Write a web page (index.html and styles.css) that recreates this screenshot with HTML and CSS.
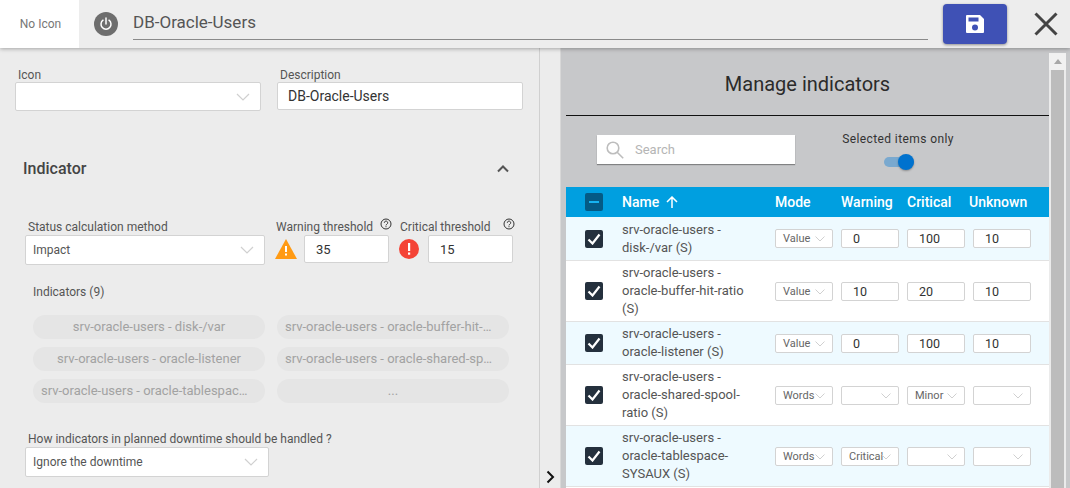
FILE: index.html
```html
<!DOCTYPE html>
<html>
<head>
  <title>DB-Oracle-Users</title>
  <link rel="stylesheet" href="styles.css">
</head>
<body>
  <!-- Top bar -->
  <div class="topbar">
    <div class="no-icon">No Icon</div>
    <div class="power">
      <svg width="14" height="14" viewBox="0 0 14 14"><path d="M4 3.2a5 5 0 1 0 6 0M7 1v6" fill="none" stroke="#fff" stroke-width="1.5" stroke-linecap="round"/></svg>
    </div>
    <div class="title-input">DB-Oracle-Users</div>
    <button class="save">
      <svg width="18" height="18" viewBox="0 0 18 18"><path d="M1 0h13l4 4v13a1 1 0 0 1-1 1H1a1 1 0 0 1-1-1V1a1 1 0 0 1 1-1z" fill="#fff"/><rect x="2.5" y="2.5" width="10" height="4" fill="#3f51b5"/><circle cx="9" cy="12.5" r="3" fill="#3f51b5"/></svg>
    </button>
    <div class="close">
      <svg width="24" height="24" viewBox="0 0 24 24"><path d="M1.5 1.5l21 21M22.5 1.5l-21 21" stroke="#444" stroke-width="3" fill="none"/></svg>
    </div>
  </div>

  <div class="main">
    <!-- Left form -->
    <div class="form">
      <div class="row-top">
        <div class="field">
          <label>Icon</label>
          <div class="select tall"><span></span><svg class="chev" width="14" height="8" viewBox="0 0 14 8"><path d="M1 1l6 6 6-6" fill="none" stroke="#d0d0d0" stroke-width="1.2"/></svg></div>
        </div>
        <div class="field">
          <label>Description</label>
          <div class="input desc">DB-Oracle-Users</div>
        </div>
      </div>

      <div class="section-head">
        <h3>Indicator</h3>
        <svg width="14" height="9" viewBox="0 0 14 9"><path d="M2 7.5L7 2.5l5 5" fill="none" stroke="#555" stroke-width="2"/></svg>
      </div>

      <div class="row-status">
        <div class="field status">
          <label>Status calculation method</label>
          <div class="select"><span>Impact</span><svg class="chev" width="14" height="8" viewBox="0 0 14 8"><path d="M1 1l6 6 6-6" fill="none" stroke="#d0d0d0" stroke-width="1.2"/></svg></div>
        </div>
        <div class="field warn">
          <label>Warning threshold <svg class="help" width="12" height="12" viewBox="0 0 12 12"><circle cx="6" cy="6" r="5" fill="none" stroke="#333" stroke-width="1"/><path d="M4.3 4.8a1.7 1.7 0 1 1 2.6 1.4c-.6.4-.9.7-.9 1.2" fill="none" stroke="#333" stroke-width="1"/><rect x="5.5" y="8.2" width="1" height="1" fill="#333"/></svg></label>
          <div class="thresh">
            <svg width="22" height="20" viewBox="0 0 22 20"><path d="M11 0l11 20H0z" fill="#ff9a13"/><rect x="10" y="7" width="2" height="6" fill="#fff"/><rect x="10" y="14.5" width="2" height="2" fill="#fff"/></svg>
            <div class="input small">35</div>
          </div>
        </div>
        <div class="field crit">
          <label>Critical threshold <svg class="help" width="12" height="12" viewBox="0 0 12 12"><circle cx="6" cy="6" r="5" fill="none" stroke="#333" stroke-width="1"/><path d="M4.3 4.8a1.7 1.7 0 1 1 2.6 1.4c-.6.4-.9.7-.9 1.2" fill="none" stroke="#333" stroke-width="1"/><rect x="5.5" y="8.2" width="1" height="1" fill="#333"/></svg></label>
          <div class="thresh">
            <svg width="20" height="20" viewBox="0 0 20 20"><circle cx="10" cy="10" r="10" fill="#f44336"/><rect x="9" y="4" width="2.2" height="8" fill="#fff"/><rect x="9" y="13.5" width="2.2" height="2.2" fill="#fff"/></svg>
            <div class="input small">15</div>
          </div>
        </div>
      </div>

      <div class="chips-title">Indicators (9)</div>
      <div class="chips">
        <div class="chip">srv-oracle-users - disk-/var</div>
        <div class="chip cut">srv-oracle-users - oracle-buffer-hit-…</div>
        <div class="chip">srv-oracle-users - oracle-listener</div>
        <div class="chip cut">srv-oracle-users - oracle-shared-sp…</div>
        <div class="chip cut">srv-oracle-users - oracle-tablespac…</div>
        <div class="chip">...</div>
      </div>

      <div class="field downtime">
        <label>How indicators in planned downtime should be handled ?</label>
        <div class="select"><span>Ignore the downtime</span><svg class="chev" width="14" height="8" viewBox="0 0 14 8"><path d="M1 1l6 6 6-6" fill="none" stroke="#d0d0d0" stroke-width="1.2"/></svg></div>
      </div>
    </div>

    <!-- Collapse handle -->
    <div class="handle">
      <svg width="9" height="14" viewBox="0 0 9 14"><path d="M1.5 1.5L7 7l-5.5 5.5" fill="none" stroke="#111" stroke-width="2"/></svg>
    </div>

    <!-- Manage indicators panel -->
    <div class="panel">
      <div class="panel-body">
        <div class="panel-title">Manage indicators</div>
        <div class="toolbar">
          <div class="search">
            <svg width="18" height="18" viewBox="0 0 18 18"><circle cx="7" cy="7" r="5.8" fill="none" stroke="#bdbdbd" stroke-width="1.6"/><path d="M11.2 11.2l6 6" stroke="#bdbdbd" stroke-width="1.6"/></svg>
            <span>Search</span>
          </div>
          <div class="selected-only">
            <div>Selected items only</div>
            <div class="switch"><i></i></div>
          </div>
        </div>

        <div class="table">
          <div class="tr th">
            <div class="cb minus"><i></i></div>
            <div class="th-name">Name
              <svg width="12" height="12" viewBox="0 0 12 12"><path d="M6 12V1M1 6l5-5 5 5" fill="none" stroke="#fff" stroke-width="1.5"/></svg>
            </div>
            <div>Mode</div><div>Warning</div><div>Critical</div><div class="th-unknown">Unknown</div>
          </div>

          <div class="tr alt">
            <div class="cb"><svg width="14" height="12" viewBox="0 0 14 12"><path d="M1.5 6.5l4 4 7-9" fill="none" stroke="#fff" stroke-width="2.2"/></svg></div>
            <div class="name">srv-oracle-users - disk-/var (S)</div>
            <div class="mini-sel">Value<svg width="10" height="6" viewBox="0 0 10 6"><path d="M.5.5L5 5 9.500.5" fill="none" stroke="#d0d0d0"/></svg></div>
            <div class="mini">0</div><div class="mini">100</div><div class="mini">10</div>
          </div>
          <div class="tr">
            <div class="cb"><svg width="14" height="12" viewBox="0 0 14 12"><path d="M1.5 6.5l4 4 7-9" fill="none" stroke="#fff" stroke-width="2.2"/></svg></div>
            <div class="name">srv-oracle-users - oracle-buffer-hit-ratio (S)</div>
            <div class="mini-sel">Value<svg width="10" height="6" viewBox="0 0 10 6"><path d="M.5.5L5 5 9.500.5" fill="none" stroke="#d0d0d0"/></svg></div>
            <div class="mini">10</div><div class="mini">20</div><div class="mini">10</div>
          </div>
          <div class="tr alt">
            <div class="cb"><svg width="14" height="12" viewBox="0 0 14 12"><path d="M1.5 6.5l4 4 7-9" fill="none" stroke="#fff" stroke-width="2.2"/></svg></div>
            <div class="name">srv-oracle-users - oracle-listener (S)</div>
            <div class="mini-sel">Value<svg width="10" height="6" viewBox="0 0 10 6"><path d="M.5.5L5 5 9.500.5" fill="none" stroke="#d0d0d0"/></svg></div>
            <div class="mini">0</div><div class="mini">100</div><div class="mini">10</div>
          </div>
          <div class="tr">
            <div class="cb"><svg width="14" height="12" viewBox="0 0 14 12"><path d="M1.5 6.5l4 4 7-9" fill="none" stroke="#fff" stroke-width="2.2"/></svg></div>
            <div class="name">srv-oracle-users - oracle-shared-spool-ratio (S)</div>
            <div class="mini-sel">Words<svg width="10" height="6" viewBox="0 0 10 6"><path d="M.5.5L5 5 9.500.5" fill="none" stroke="#d0d0d0"/></svg></div>
            <div class="mini-sel"><svg width="10" height="6" viewBox="0 0 10 6"><path d="M.5.5L5 5 9.500.5" fill="none" stroke="#d0d0d0"/></svg></div>
            <div class="mini-sel">Minor<svg width="10" height="6" viewBox="0 0 10 6"><path d="M.5.5L5 5 9.500.5" fill="none" stroke="#d0d0d0"/></svg></div>
            <div class="mini-sel"><svg width="10" height="6" viewBox="0 0 10 6"><path d="M.5.5L5 5 9.500.5" fill="none" stroke="#d0d0d0"/></svg></div>
          </div>
          <div class="tr alt">
            <div class="cb"><svg width="14" height="12" viewBox="0 0 14 12"><path d="M1.5 6.5l4 4 7-9" fill="none" stroke="#fff" stroke-width="2.2"/></svg></div>
            <div class="name">srv-oracle-users - oracle-tablespace-SYSAUX (S)</div>
            <div class="mini-sel">Words<svg width="10" height="6" viewBox="0 0 10 6"><path d="M.5.5L5 5 9.500.5" fill="none" stroke="#d0d0d0"/></svg></div>
            <div class="mini-sel">Critical<svg width="10" height="6" viewBox="0 0 10 6"><path d="M.5.5L5 5 9.500.5" fill="none" stroke="#d0d0d0"/></svg></div>
            <div class="mini-sel"><svg width="10" height="6" viewBox="0 0 10 6"><path d="M.5.5L5 5 9.500.5" fill="none" stroke="#d0d0d0"/></svg></div>
            <div class="mini-sel"><svg width="10" height="6" viewBox="0 0 10 6"><path d="M.5.5L5 5 9.500.5" fill="none" stroke="#d0d0d0"/></svg></div>
          </div>
          <div class="tr rest"></div>
        </div>
      </div>

      <div class="scrollbar">
        <div class="scroll-up"><i></i></div>
        <div class="scroll-thumb"></div>
      </div>
    </div>
  </div>
</body>
</html>
```

FILE: styles.css
```css
/* Basic reset */
* {
  box-sizing: border-box;
  margin: 0;
  padding: 0;
}

body {
  font-family: Roboto, Arial, sans-serif;
  background-color: #ececec;
  color: #444;
  width: 1070px;
  height: 488px;
  overflow: hidden;
  display: flex;
  flex-direction: column;
}

/* Top bar */
.topbar {
  height: 48px;
  display: flex;
  align-items: center;
  flex-shrink: 0;
  position: relative;
  z-index: 2;
  background-color: #ededed;
  box-shadow: 0 1px 4px rgba(0, 0, 0, 0.3);
}

.no-icon {
  width: 79px;
  height: 48px;
  padding-left: 2px;
  background-color: #fff;
  color: #777;
  font-size: 12px;
  display: flex;
  align-items: center;
  justify-content: center;
}

.power {
  width: 24px;
  height: 24px;
  margin-left: 15px;
  border-radius: 50%;
  background-color: #6e6e6e;
  display: flex;
  align-items: center;
  justify-content: center;
}

.title-input {
  width: 795px;
  height: 32px;
  margin-left: 15px;
  align-self: flex-start;
  margin-top: 8px;
  border-bottom: 1px solid #8a8a8a;
  font-size: 17px;
  line-height: 28px;
  color: #555;
}

.save {
  width: 64px;
  height: 40px;
  margin-left: 15px;
  background-color: #3f51b5;
  border: none;
  border-radius: 4px;
  box-shadow: 0 1px 3px rgba(0, 0, 0, 0.4);
  display: flex;
  align-items: center;
  justify-content: center;
}

.close {
  margin-left: 27px;
  width: 24px;
  height: 24px;
}

/* Main area */
.main {
  flex: 1;
  display: flex;
  min-height: 0;
}

.form {
  width: 540px;
  border-right: 1px solid #d0d0d0;
  padding: 20px 0 0 15px;
  flex-shrink: 0;
}

label {
  display: block;
  font-size: 12px;
  line-height: 14px;
  color: #555;
  white-space: nowrap;
}

.field > label {
  padding-left: 3px;
}

.row-top {
  display: flex;
  gap: 16px;
}

.row-top .field {
  width: 246px;
}

.select,
.input {
  background-color: #fff;
  border: 1px solid #d3d3d3;
  border-radius: 2px;
  font-size: 12px;
  color: #555;
  display: flex;
  align-items: center;
}

.select {
  height: 30px;
  margin-top: 1px;
  justify-content: space-between;
  padding: 0 10px 0 7px;
}

.select.tall {
  height: 29px;
  margin-top: 0;
}

.input {
  color: #333;
}

.input.desc {
  height: 28px;
  font-size: 14px;
  padding-left: 10px;
}

.input.small {
  width: 85px;
  height: 28px;
  font-size: 13px;
  padding-left: 11px;
}

.section-head {
  width: 487px;
  margin: 47px 0 0 8px;
  display: flex;
  justify-content: space-between;
  align-items: center;
  height: 20px;
}

.section-head h3 {
  font-size: 16px;
  font-weight: 500;
  color: #444;
}

.row-status {
  display: flex;
  margin: 42px 0 0 10px;
}

.status {
  width: 240px;
  margin-right: 11px;
}

.warn {
  width: 114px;
  margin-right: 10px;
}

.warn > label,
.crit > label {
  padding-left: 0;
  position: relative;
}

.help {
  position: absolute;
  right: -2px;
  top: -2px;
}

.crit .help {
  right: -1px;
}

.crit {
  width: 114px;
}

.thresh {
  display: flex;
  align-items: center;
  margin-top: 1px;
  margin-left: -1px;
  gap: 9px;
}

.warn .thresh {
  gap: 7px;
}

.chips-title {
  margin: 20px 0 0 18px;
  font-size: 12px;
  line-height: 14px;
  color: #555;
}

.chips {
  display: grid;
  grid-template-columns: 232px 232px;
  column-gap: 12px;
  row-gap: 8px;
  margin: 16px 0 0 18px;
}

.chip {
  height: 24px;
  line-height: 24px;
  border-radius: 12px;
  background-color: #e5e5e5;
  color: #a2a2a2;
  font-size: 13px;
  text-align: center;
  white-space: nowrap;
}

.chip.cut {
  text-align: left;
  padding-left: 8px;
}

.downtime {
  width: 244px;
  margin: 29px 0 0 10px;
}

/* Collapse handle */
.handle {
  width: 20px;
  flex-shrink: 0;
  display: flex;
  align-items: flex-end;
  justify-content: center;
  padding-bottom: 4px;
}

/* Manage panel */
.panel {
  flex: 1;
  display: flex;
  background-color: #c7c8ca;
  border-left: 1px solid #d8d8d8;
  padding: 5px 0 0 5px;
  overflow: hidden;
}

.panel-body {
  width: 483px;
  flex-shrink: 0;
}

.panel-title {
  height: 63px;
  border-bottom: 1px solid #111;
  font-size: 20px;
  line-height: 62px;
  text-align: center;
  color: #2b2b2b;
}

.toolbar {
  height: 71px;
  display: flex;
  padding: 19px 0 0 31px;
}

.search {
  width: 198px;
  height: 29px;
  background-color: #fff;
  box-shadow: 0 1px 1px rgba(0, 0, 0, 0.35);
  display: flex;
  align-items: center;
  gap: 11px;
  padding-left: 9px;
  font-size: 13px;
  color: #b5b5b5;
}

.selected-only {
  width: 130px;
  margin-left: 38px;
  margin-top: -3px;
  text-align: center;
  font-size: 12px;
  letter-spacing: 0.4px;
  color: #333;
}

.switch {
  width: 30px;
  height: 10px;
  margin: 11px auto 0;
  border-radius: 5px;
  background-color: #7aa9cf;
  position: relative;
  left: 1px;
}

.switch i {
  position: absolute;
  right: 0;
  top: -3px;
  width: 16px;
  height: 16px;
  border-radius: 50%;
  background-color: #0072ce;
  box-shadow: 0 1px 2px rgba(0, 0, 0, 0.3);
}

/* Table */
.tr {
  display: grid;
  grid-template-columns: 29px 145px 58px 58px 58px 58px;
  column-gap: 8px;
  align-items: center;
  background-color: #fff;
  border-bottom: 1px solid #e2e2e2;
  padding: 3px 0 3px 19px;
}

.tr.alt {
  background-color: #eefaff;
}

.th + .tr {
  min-height: 44px;
}

.tr.rest {
  height: 20px;
  border: none;
}

.th {
  height: 30px;
  padding: 0 0 0 19px;
  border: none;
  background-color: #009fe0;
  color: #fff;
  font-size: 14px;
  font-weight: 500;
}

.th-name {
  display: flex;
  align-items: center;
  gap: 7px;
}

.th-unknown {
  margin-left: -4px;
}

.cb {
  width: 18px;
  height: 18px;
  border-radius: 2px;
  background-color: #24303d;
  display: flex;
  align-items: center;
  justify-content: center;
}

.cb.minus {
  background-color: #045a85;
}

.cb.minus i {
  width: 10px;
  height: 2px;
  background-color: #16b3f0;
}

.name {
  font-size: 13px;
  line-height: 18px;
  color: #555;
  padding-right: 5px;
}

.mini,
.mini-sel {
  height: 19px;
  background-color: #fff;
  border: 1px solid #d3d3d3;
  border-radius: 2px;
  display: flex;
  align-items: center;
}

.mini {
  font-size: 12.5px;
  color: #333;
  padding-left: 11px;
}

.mini-sel {
  font-size: 11px;
  color: #666;
  padding-left: 7px;
  position: relative;
}

.mini-sel svg {
  position: absolute;
  right: 7px;
  top: 6px;
}

/* Scrollbar */
.scrollbar {
  width: 17px;
  display: flex;
  flex-direction: column;
  background-color: #ebebeb;
}

.scroll-up {
  height: 17px;
  flex-shrink: 0;
  background-color: #f1f1f1;
  display: flex;
  align-items: center;
  justify-content: center;
}

.scroll-up i {
  border-left: 4px solid transparent;
  border-right: 4px solid transparent;
  border-bottom: 5px solid #a8a8a8;
}

.scroll-thumb {
  flex: 1;
  margin: 0 2px;
  background-color: #bcbcbc;
}
```
